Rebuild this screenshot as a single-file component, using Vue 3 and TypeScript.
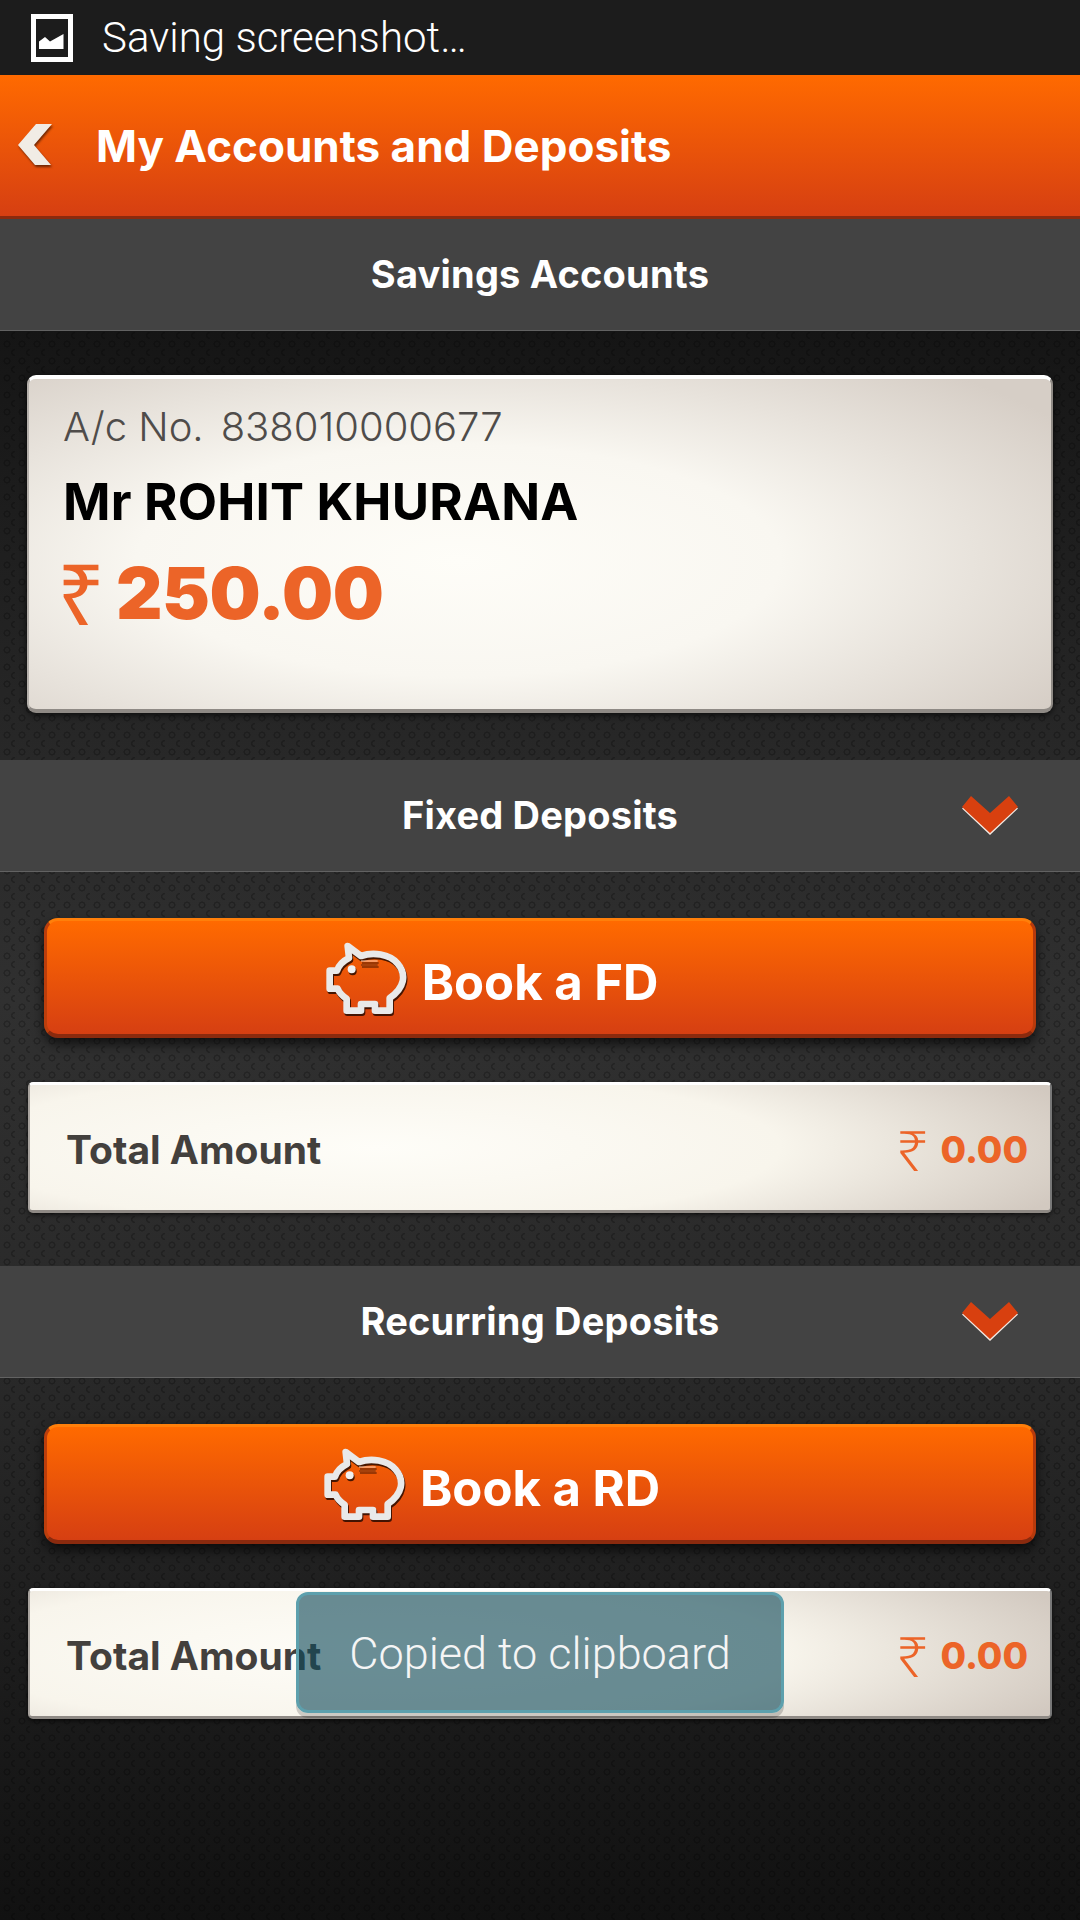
<script setup lang="ts">
interface Deposit {
  title: string
  action: string
  amount: string
}

const deposits: Deposit[] = [
  { title: 'Fixed Deposits', action: 'Book a FD', amount: '0.00' },
  { title: 'Recurring Deposits', action: 'Book a RD', amount: '0.00' }
]
</script>

<template>
  <div class="screen">
    <div class="status-bar">
      <svg class="status-icon" width="42" height="48" viewBox="0 0 42 48">
        <rect x="2.500" y="2.500" width="37" height="43" fill="none" stroke="#fff" stroke-width="5" />
        <path d="M8 35V27.500L14 23L19 27.500L32.500 20V35Z" fill="#fff" />
      </svg>
      <span class="status-text">Saving screenshot…</span>
    </div>

    <header class="app-header">
      <svg class="back-icon" width="40" height="48" viewBox="0 0 40 48">
        <path d="M20 2H36L18 23L35 43H19L2 23Z" fill="#f1ece5" />
      </svg>
      <h1>My Accounts and Deposits</h1>
    </header>

    <div class="section-bar">Savings Accounts</div>

    <div class="savings">
      <div class="account-card">
        <div class="account-no"><span>A/c No.</span><span>838010000677</span></div>
        <div class="account-name">Mr ROHIT KHURANA</div>
        <div class="account-balance"><span class="rupee">₹</span><span>250.00</span></div>
      </div>
    </div>

    <template v-for="item in deposits" :key="item.title">
      <div class="section-bar">
        {{ item.title }}
        <svg class="chevron" width="58" height="40" viewBox="0 0 58 40">
          <path d="M1 13.500L29 40L57 13.500L55 12L29 36.500L3 12Z" fill="#f3e9e2" />
          <path d="M1 12L10 1L29 18L48 1L57 12L29 38Z" fill="#d8400f" />
        </svg>
      </div>
      <div class="deposit-body">
        <button class="book-btn">
          <span class="book-label">
            <svg class="pig" width="82" height="74" viewBox="135 130 246 222">
              <path
                d="M200 142L240 172C275 160 325 165 350 195C378 228 370 268 326 298V336H282V316H240V336H197V300C185 292 175 282 170 270H146V216H168C174 198 188 186 204 178Z"
                fill="none"
                stroke="#e9e9e9"
                stroke-width="20"
                stroke-linejoin="round"
              />
              <circle cx="212" cy="212" r="12" fill="#f1f1f1" />
              <path d="M240 187H290" stroke="#ffd9bf" stroke-width="3" />
              <path d="M240 199H290" stroke="#5e2a10" stroke-width="3" />
            </svg>
            {{ item.action }}
          </span>
        </button>
        <div class="total-strip">
          <span class="total-label">Total Amount</span>
          <span class="total-amount"><span class="rupee">₹</span><span>{{ item.amount }}</span></span>
        </div>
      </div>
    </template>

    <div class="toast">Copied to clipboard</div>
  </div>
</template>

<style>
html,
body {
  margin: 0;
  background: #111;
}
</style>

<style scoped>
.screen {
  position: relative;
  width: 1080px;
  height: 1920px;
  overflow: hidden;
  display: flex;
  flex-direction: column;
  font-family: Inter, "Liberation Sans", sans-serif;
  background-color: #1c1c1c;
  background-image:
    radial-gradient(circle at 7px 4px, transparent 1.800px, rgba(0, 0, 0, 0.24) 2.300px, rgba(0, 0, 0, 0.24) 3.300px, transparent 3.800px),
    radial-gradient(circle at 14.500px 12.500px, transparent 1.800px, rgba(0, 0, 0, 0.24) 2.300px, rgba(0, 0, 0, 0.24) 3.300px, transparent 3.800px),
    linear-gradient(180deg, #151515 330px, #282828 760px, #303030 1000px, #282828 1400px, #111 1920px);
  background-size: 15px 17px, 15px 17px, 100% 100%;
}

.status-bar {
  height: 75px;
  flex: none;
  display: flex;
  align-items: center;
  background: #1c1c1c;
  padding-left: 31px;
  box-sizing: border-box;
}

.status-text {
  margin-left: 29px;
  color: #fff;
  font-family: Roboto, sans-serif;
  font-weight: 300;
  font-size: 42px;
}

.app-header {
  height: 144px;
  flex: none;
  box-sizing: border-box;
  display: flex;
  align-items: center;
  padding-left: 16px;
  background: linear-gradient(180deg, #ff6a00 0%, #d63f12 100%);
  border-bottom: 3px solid #8a2a0e;
}

.back-icon {
  filter: drop-shadow(1px 2px 1px rgba(60, 20, 0, 0.7));
}

.app-header h1 {
  margin: 0 0 0 40px;
  color: #fff;
  font-size: 44px;
  font-weight: 700;
}

.section-bar {
  position: relative;
  height: 112px;
  flex: none;
  box-sizing: border-box;
  display: flex;
  align-items: center;
  justify-content: center;
  padding-bottom: 2px;
  background: #434343;
  border-bottom: 1px solid #626262;
  color: #fff;
  font-size: 38px;
  font-weight: 700;
  letter-spacing: 0.2px;
}

.chevron {
  position: absolute;
  right: 61px;
  top: 35px;
}

.savings {
  height: 429px;
  flex: none;
  box-sizing: border-box;
  padding: 44px 27px 0;
}

.account-card {
  height: 338px;
  box-sizing: border-box;
  padding: 23px 34px;
  border-radius: 9px;
  border-top: 4px solid #fff;
  border-bottom: 4px solid #8f8a85;
  border-left: 2px solid #b5b0ab;
  border-right: 2px solid #8f8a85;
  background: radial-gradient(ellipse 70% 78% at 42% 55%, #fefdf8 0%, #f9f7f1 45%, #d6cec6 100%);
  box-shadow: 0 2px 6px rgba(0, 0, 0, 0.7);
}

.account-no {
  display: flex;
  gap: 17px;
  color: #4f4c4a;
  font-size: 40px;
  font-weight: 300;
}

.account-name {
  margin-top: 20px;
  color: #000;
  font-size: 51px;
  font-weight: 700;
  letter-spacing: 0.2px;
}

.account-balance {
  margin-top: 17px;
  display: flex;
  align-items: center;
  gap: 11px;
  color: #ec6428;
  font-size: 72px;
  font-weight: 900;
  letter-spacing: -0.5px;
}

.rupee {
  font-family: "Noto Sans", "DejaVu Sans", sans-serif;
  font-weight: 400;
  line-height: 1;
  letter-spacing: 0;
}

.account-balance .rupee {
  margin-left: -6px;
  font-size: 84px;
}

.deposit-body {
  flex: none;
  height: 394px;
  box-sizing: border-box;
  padding: 46px 27px 0;
  display: flex;
  flex-direction: column;
}

.book-btn {
  height: 120px;
  margin: 0 17px;
  padding: 10px 0 0;
  flex: none;
  display: flex;
  align-items: center;
  justify-content: center;
  border: none;
  border-top: 3px solid #ff7f0a;
  border-bottom: 4px solid #8a2a0e;
  border-left: 3px solid #bb3e0c;
  border-right: 3px solid #b73a0c;
  border-radius: 14px;
  background: linear-gradient(180deg, #ff6a00 0%, #d63f12 100%);
  box-shadow: 0 6px 12px rgba(0, 0, 0, 0.65);
  color: #fff;
  font-family: inherit;
  font-size: 49px;
  font-weight: 700;
}

.book-label {
  position: relative;
}

.pig {
  position: absolute;
  right: 100%;
  top: -11px;
  margin-right: 14px;
  filter: drop-shadow(1px 2px 0 rgba(40, 10, 0, 0.85));
}

.total-strip {
  margin: 44px 1px 0;
  height: 131px;
  flex: none;
  box-sizing: border-box;
  display: flex;
  align-items: center;
  justify-content: space-between;
  padding: 3px 22px 0 36px;
  border-radius: 5px;
  border-top: 3px solid #fff;
  border-bottom: 3px solid #8f8a85;
  border-left: 2px solid #a8a39e;
  border-right: 2px solid #777;
  background: radial-gradient(ellipse 72% 110% at 34% 50%, #fefdf8 0%, #f8f5ec 55%, #d2c9c0 100%);
  box-shadow: 0 2px 4px rgba(0, 0, 0, 0.6);
}

.total-label {
  color: #43403d;
  font-size: 39px;
  font-weight: 700;
}

.total-amount {
  display: flex;
  align-items: center;
  gap: 12px;
  color: #ec6428;
  font-size: 37px;
  font-weight: 800;
}

.total-amount .rupee {
  font-size: 56px;
  font-weight: 300;
}

.toast {
  position: absolute;
  left: 296px;
  top: 1592px;
  width: 488px;
  height: 121px;
  box-sizing: border-box;
  display: flex;
  align-items: center;
  justify-content: center;
  padding-top: 2px;
  border: 3px solid #5da0ad;
  border-radius: 12px;
  background: rgba(14, 72, 88, 0.62);
  box-shadow: 0 5px 0 rgba(0, 0, 0, 0.18);
  color: #f5f5f5;
  font-family: Roboto, sans-serif;
  font-weight: 300;
  font-size: 45px;
}
</style>
